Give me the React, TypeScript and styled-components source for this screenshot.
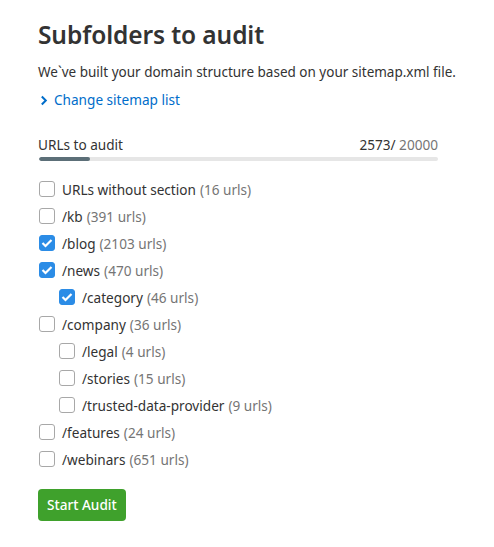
import React from "react";
import styled, { createGlobalStyle } from "styled-components";

const Global = createGlobalStyle`
  html, body { margin: 0; padding: 0; background: #fff; }
  body { font-family: "Noto Sans", "Open Sans", sans-serif; color: #333; }
  * { box-sizing: border-box; }
`;

const Page = styled.div`
  padding: 18px 20px 0 38px;
  display: flex;
  flex-direction: column;
`;

const Title = styled.h1`
  margin: 0;
  font-size: 24.5px;
  line-height: 34px;
  font-weight: 600;
  color: #333;
  letter-spacing: -0.1px;
`;

const Subtitle = styled.p`
  margin: 10px 0 0;
  font-size: 13.5px;
  line-height: 20px;
  color: #333;
  white-space: nowrap;
`;

const LinkRow = styled.a`
  margin-top: 8px;
  display: inline-flex;
  align-items: center;
  gap: 6px;
  color: #006dca;
  font-size: 13.6px;
  line-height: 20px;
  text-decoration: none;
  padding-left: 2px;
`;

const Progress = styled.div`
  margin-top: 24px;
  width: 400px;
  display: flex;
  flex-direction: column;
  gap: 2px;
`;

const ProgressHead = styled.div`
  display: flex;
  justify-content: space-between;
  font-size: 13.6px;
  line-height: 20px;
`;

const Total = styled.span`
  color: #757575;
`;

const Track = styled.div`
  height: 4px;
  border-radius: 2px;
  background: #e6e6e6;
  overflow: hidden;
  margin-left: 1px;
`;

const Fill = styled.div`
  height: 100%;
  background: #5c6f78;
  border-radius: 2px;
`;

const List = styled.div`
  margin-top: 15px;
  display: flex;
  flex-direction: column;
`;

const Row = styled.label<{ $level: number }>`
  display: flex;
  align-items: center;
  gap: 7px;
  height: 27px;
  padding-left: ${(p) => 1 + p.$level * 20}px;
  font-size: 13.6px;
  color: #333;
`;

const Box = styled.span<{ $checked: boolean }>`
  width: 16px;
  height: 16px;
  border-radius: 3px;
  flex: none;
  display: flex;
  align-items: center;
  justify-content: center;
  background: ${(p) => (p.$checked ? "#2b8ce6" : "#fff")};
  border: 1px solid ${(p) => (p.$checked ? "#2b8ce6" : "#a8a8a8")};
`;

const Count = styled.span`
  color: #757575;
  margin-left: 4px;
`;

const Button = styled.button`
  margin-top: 16px;
  align-self: flex-start;
  height: 32px;
  padding: 0 9px;
  border: none;
  border-radius: 4px;
  background: #3fa12c;
  color: #fff;
  font-family: inherit;
  font-size: 13.6px;
  font-weight: 500;
`;

const items = [
  { name: "URLs without section", count: 16, level: 0, checked: false },
  { name: "/kb", count: 391, level: 0, checked: false },
  { name: "/blog", count: 2103, level: 0, checked: true },
  { name: "/news", count: 470, level: 0, checked: true },
  { name: "/category", count: 46, level: 1, checked: true },
  { name: "/company", count: 36, level: 0, checked: false },
  { name: "/legal", count: 4, level: 1, checked: false },
  { name: "/stories", count: 15, level: 1, checked: false },
  { name: "/trusted-data-provider", count: 9, level: 1, checked: false },
  { name: "/features", count: 24, level: 0, checked: false },
  { name: "/webinars", count: 651, level: 0, checked: false },
];

export default function App() {
  const used = 2573;
  const max = 20000;
  return (
    <>
      <Global />
      <Page>
        <Title>Subfolders to audit</Title>
        <Subtitle>We`ve built your domain structure based on your sitemap.xml file.</Subtitle>
        <div>
          <LinkRow href="#">
            <svg width="8" height="11" viewBox="0 0 8 11">
              <path d="M1.8 1.5 L5.8 5.5 L1.8 9.5" fill="none" stroke="#006dca" strokeWidth="2" />
            </svg>
            Change sitemap list
          </LinkRow>
        </div>
        <Progress>
          <ProgressHead>
            <span>URLs to audit</span>
            <span>
              {used}/ <Total>{max}</Total>
            </span>
          </ProgressHead>
          <Track>
            <Fill style={{ width: `${(used / max) * 100}%` }} />
          </Track>
        </Progress>
        <List>
          {items.map((it) => (
            <Row key={it.name} $level={it.level}>
              <Box $checked={it.checked}>
                {it.checked && (
                  <svg width="12" height="10" viewBox="0 0 12 10">
                    <path d="M1.5 5 L4.5 8 L10.5 2" fill="none" stroke="#fff" strokeWidth="2.2" />
                  </svg>
                )}
              </Box>
              <span>
                {it.name}
                <Count>({it.count} urls)</Count>
              </span>
            </Row>
          ))}
        </List>
        <Button>Start Audit</Button>
      </Page>
    </>
  );
}
